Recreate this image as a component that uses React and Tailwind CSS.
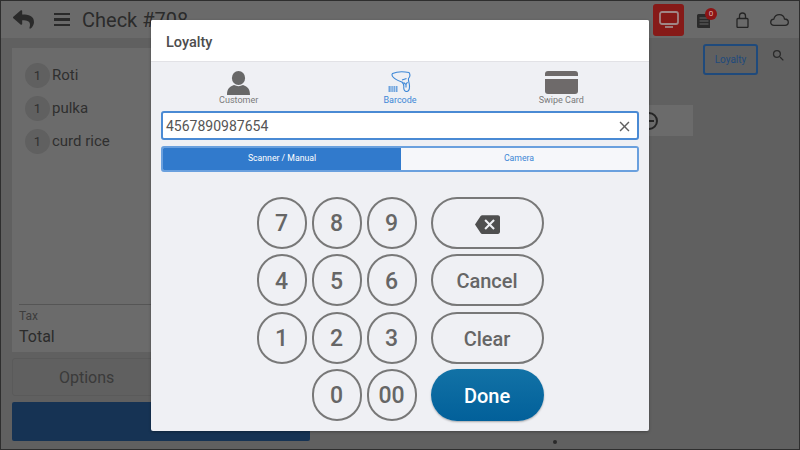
import React from 'react';
import { FaReply } from 'react-icons/fa';
import { MdBackspace, MdClose, MdSearch } from 'react-icons/md';

const items = ['Roti', 'pulka', 'curd rice'];

const Monitor = () => (
    <svg width="20" height="18" viewBox="0 0 20 18" fill="none">
        <rect x="1" y="1" width="18" height="12" rx="2" stroke="#a08686" strokeWidth="1.800" />
        <path d="M6 16h8" stroke="#a08686" strokeWidth="1.800" />
    </svg>
);

const Orders = () => (
    <svg width="14" height="14" viewBox="0 0 14 14">
        <path d="M0 1.500A1.500 1.500 0 0 1 1.500 0H13v14H1.500A1.500 1.500 0 0 1 0 12.500Z" fill="#2a2a2a" />
        <path d="M2.500 4h9M2.500 7h9M2.500 10h9" stroke="#666" strokeWidth="1.200" />
    </svg>
);

const Lock = () => (
    <svg width="13" height="16" viewBox="0 0 13 16" fill="none" stroke="#252525" strokeWidth="1.300">
        <rect x="1" y="6.500" width="11" height="9" rx="1" />
        <path d="M3.500 6.500V4a3 3 0 0 1 6 0v2.500" />
    </svg>
);

const Cloud = () => (
    <svg width="19" height="12" viewBox="0 0 19 12" fill="none" stroke="#252525" strokeWidth="1.300">
        <path d="M4 11.300C2 11.300.7 10 .7 8.300.7 6.500 2 5.300 3.800 5.200 4.500 2.500 6.500.7 9.300.7c2.800 0 4.700 1.800 5.200 4.300 2 .1 3.800 1.300 3.800 3.200 0 1.800-1.400 3.100-3.300 3.100Z" />
    </svg>
);

const Customer = () => (
    <svg width="23" height="24" viewBox="0 0 23 24" fill="#686868">
        <ellipse cx="11.500" cy="7" rx="6.600" ry="7" />
        <path d="M0 24c0-6 2-8 7-10 3 1.500 6 1.500 9 0 5 2 7 4 7 10Z" />
    </svg>
);

const Scanner = () => (
    <svg width="23" height="21" viewBox="0 0 23 21" fill="none" stroke="#3d87d6" strokeWidth="1.100">
        <path d="M4.500 2.500C9 .5 16 .5 21 1.500c1.300 1.800.8 4.500-.5 6-.5 2.500 1.200 5 1 8 0 3-1.300 5-3 5s-3-2-2.700-4.500c.2-2-.3-3.500-1.800-5C10 9.500 7 8.500 5 6c-1-1.300-1.200-2.700-.5-3.500Z" />
        <path d="M14 9l4.500-1.500M15.500 11.500l2.500 2 1.500-2.500M18 13.500v3" />
        <path d="M.5 15h9v6h-9Z" fill="#6da3de" stroke="none" />
        <path d="M3 15v6M5.200 15v6M7.400 15v6" stroke="#eff0f4" strokeWidth="0.700" />
    </svg>
);

const Card = () => (
    <svg width="33" height="23" viewBox="0 0 33 23" fill="#6e6a6a">
        <path d="M0 5V3a3 3 0 0 1 3-3h27a3 3 0 0 1 3 3v2Z" />
        <path d="M0 8h33v12a3 3 0 0 1-3 3H3a3 3 0 0 1-3-3Z" />
    </svg>
);

const Key = ({ children, wide, primary }) => (
    <button
        className={`h-[52px] rounded-full flex items-center justify-center ${wide ? 'w-[113px] text-[20px] font-medium pt-[2px]' : 'w-[50px] text-[23px] font-medium pt-[3px]'} ${primary ? 'bg-gradient-to-b from-[#1272a6] to-[#02609a] text-white shadow-[0_1px_2px_rgba(0,0,0,0.3)]' : 'border-2 border-[#787878] text-[#666666]'}`}
    >
        {children}
    </button>
);

const App = () => {
    return (
        <div className="relative w-[800px] h-[450px] overflow-hidden border border-[#2e2e2e] bg-[#606060] font-['Roboto',sans-serif]">
            {/* page behind the dialog */}
            <div className="h-[37px] flex items-center bg-[#6a6a6a]">
                <FaReply className="ml-[12px] text-[#2a2a2a]" size={21} />
                <div className="ml-[20px] w-[16px] flex flex-col gap-[3px]">
                    <div className="h-[2.500px] bg-[#2a2a2a]" />
                    <div className="h-[2.500px] bg-[#2a2a2a]" />
                    <div className="h-[2.500px] bg-[#2a2a2a]" />
                </div>
                <span className="ml-[12px] text-[20px] text-[#2b2b2b]">Check #708</span>
                <div className="ml-auto flex items-center">
                    <div className="w-[31px] h-[32px] rounded-[3px] bg-[#861a18] flex items-center justify-center">
                        <Monitor />
                    </div>
                    <div className="relative ml-[13px] mt-[3px]">
                        <Orders />
                        <div className="absolute -top-[6px] left-[8px] w-[12px] h-[12px] rounded-full bg-[#8c1414] text-[8px] leading-[12px] text-center text-[#d8b0b0]">0</div>
                    </div>
                    <div className="ml-[25px]"><Lock /></div>
                    <div className="ml-[21px] mr-[10px]"><Cloud /></div>
                </div>
            </div>
            <div className="flex">
                <div className="ml-[11px] w-[298px]">
                    <div className="mt-[10px] h-[304px] bg-[#6b6b6b] px-[7px] flex flex-col">
                        <div className="pt-[15px] pl-[6px] flex flex-col gap-[8px]">
                            {items.map((name) => (
                                <div key={name} className="flex items-center h-[25px]">
                                    <div className="w-[25px] h-[25px] rounded-full bg-[#606060] text-[13px] text-[#303030] flex items-center justify-center">1</div>
                                    <span className="ml-[2px] text-[15px] text-[#2f2f2f]">{name}</span>
                                </div>
                            ))}
                        </div>
                        <div className="mt-auto border-t border-[#555555]">
                            <div className="text-[12px] text-[#3d3d3d] pt-[2px] leading-[18px]">Tax</div>
                            <div className="text-[16px] text-[#2b2b2b] leading-[24px] pb-[3px]">Total</div>
                        </div>
                    </div>
                    <div className="mt-[6px] h-[38px] w-[290px] rounded-[3px] border border-[#5a5a5a] text-[16px] text-[#3a3a3a] flex items-center pl-[46px] pt-[2px]">Options</div>
                    <div className="mt-[6px] h-[39px] rounded-[2px] bg-[#163354]" />
                </div>
                <div className="ml-[330px] mt-[67px] w-[53px] h-[31px] bg-[#6b6b6b] flex items-center">
                    <div className="w-[18px] h-[18px] rounded-full border-2 border-[#252525] flex items-center justify-center">
                        <div className="w-[9px] h-[2px] bg-[#252525]" />
                    </div>
                </div>
                <div className="absolute top-[43px] left-[702px] w-[55px] h-[31px] rounded-[3px] border-2 border-[#1f4a7c] text-[10px] text-[#1f4a7c] flex items-center justify-center">Loyalty</div>
                <MdSearch className="absolute top-[47px] left-[770px] text-[#2a2a2a]" size={15} />
            </div>
            <div className="absolute left-[552px] top-[439px] w-[4px] h-[4px] rounded-full bg-[#2a2a2a]" />

            {/* loyalty dialog */}
            <div className="absolute left-[150px] top-[19px] w-[498px] h-[411px] rounded-[2px] bg-[#eff0f4] shadow-[0_1px_3px_rgba(0,0,0,0.3)] flex flex-col">
                <div className="h-[42px] bg-white border-b border-[#e2e2e6] rounded-t-[2px] flex items-center pl-[15px] pt-[5px] text-[14.500px] font-medium text-[#4d4d4d]">Loyalty</div>
                <div className="px-[10px]">
                    <div className="grid grid-cols-3 -mx-[3px] pt-[9px] h-[49px]">
                        <div className="flex flex-col items-center">
                            <Customer />
                            <span className="text-[9px] leading-[10px] text-[#7a7a7a]">Customer</span>
                        </div>
                        <div className="flex flex-col items-center">
                            <Scanner />
                            <span className="text-[9px] leading-[10px] mt-[3px] text-[#3d87d6]">Barcode</span>
                        </div>
                        <div className="flex flex-col items-center">
                            <Card />
                            <span className="text-[9px] leading-[10px] mt-[1px] text-[#7a7a7a]">Swipe Card</span>
                        </div>
                    </div>
                    <div className="h-[29px] rounded-[3px] border-2 border-[#4a8ad4] bg-white flex items-center pl-[3px] pr-[4px] pt-[1px] text-[14px] text-[#555555]">
                        <span>4567890987654</span>
                        <MdClose className="ml-auto text-[#5f5f5f]" size={17} />
                    </div>
                    <div className="mt-[6px] h-[26px] rounded-[3px] border-2 border-[#6aa0de] flex overflow-hidden text-[8.700px] pt-0">
                        <div className="w-[238px] bg-[#317acc] text-white flex items-center justify-center">Scanner / Manual</div>
                        <div className="flex-1 bg-[#f6f7fa] text-[#3d87d6] flex items-center justify-center">Camera</div>
                    </div>
                    <div className="mt-[25px] flex justify-center gap-[14px]">
                        <div className="grid grid-cols-[50px_50px_50px] gap-x-[5px] gap-y-[5.300px]">
                            {['7', '8', '9', '4', '5', '6', '1', '2', '3'].map((n) => (
                                <Key key={n}>{n}</Key>
                            ))}
                            <div />
                            <Key>0</Key>
                            <Key>00</Key>
                        </div>
                        <div className="flex flex-col gap-[5.300px]">
                            <Key wide><MdBackspace className="text-[#4f4f4f]" size={25} /></Key>
                            <Key wide>Cancel</Key>
                            <Key wide>Clear</Key>
                            <Key wide primary>Done</Key>
                        </div>
                    </div>
                </div>
            </div>
        </div>
    );
};

export default App;
